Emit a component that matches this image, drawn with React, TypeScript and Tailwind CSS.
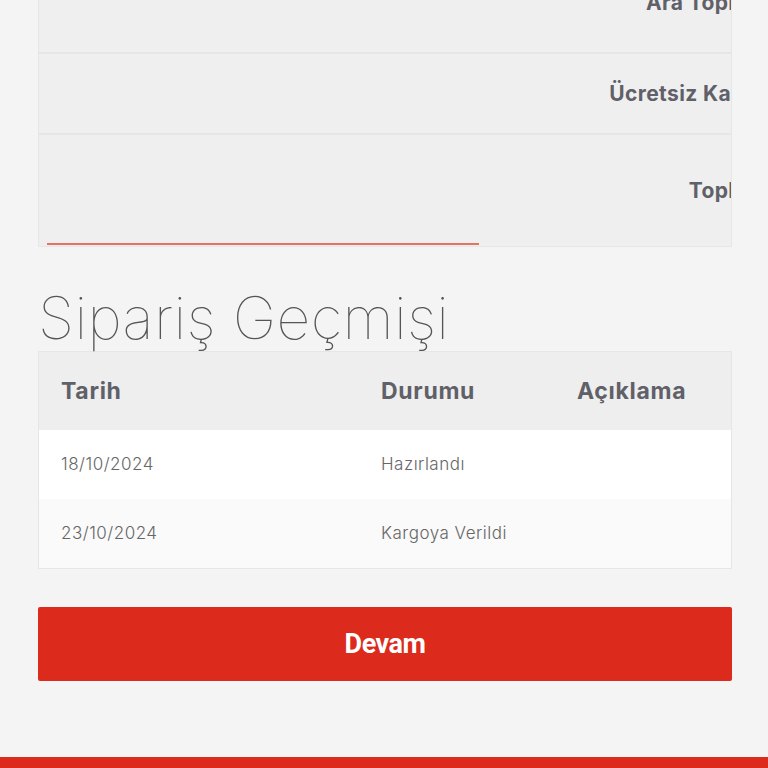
export default function App() {
  const totals = [
    { label: 'Ara Toplam:', h: 'h-[100px]' },
    { label: 'Ücretsiz Kargo:', h: 'h-[81px]' },
    { label: 'Toplam:', h: 'h-[111px]' },
  ];

  const history = [
    { date: '18/10/2024', status: 'Hazırlandı', note: '' },
    { date: '23/10/2024', status: 'Kargoya Verildi', note: '' },
  ];

  return (
    <div className="min-h-[768px] w-full overflow-hidden bg-[#f4f4f4] font-['Inter',sans-serif] flex flex-col">
      <div className="ml-[38px] w-[694px] -mt-[46px]">
        <div className="relative overflow-hidden border-x border-b border-[#e6e6e6] bg-[#efefef]">
          <div className="w-[735px]">
            {totals.map((t, i) => (
              <div
                key={t.label}
                className={`${t.h} flex items-center justify-end border-[#e6e6e6] ${i < totals.length - 1 ? 'border-b-2' : ''}`}
              >
                <span className="text-[21px] font-bold tracking-[0.4px] text-[#606068] whitespace-nowrap">{t.label}</span>
              </div>
            ))}
          </div>
          <div className="absolute bottom-[1px] left-[8px] h-[2px] w-[432px] bg-[#e07563]" />
        </div>

        <h2 className="mt-[40px] text-[59px] leading-[62px] font-[100] tracking-[0.3px] text-[#555] whitespace-nowrap">
          Sipariş Geçmişi
        </h2>

        <div className="mt-[2px] border border-[#e6e6e6] bg-white">
          <div className="grid grid-cols-[320px_196px_1fr] h-[78px] items-center bg-[#eeeeee] px-[22px] text-[23px] font-bold tracking-[0.7px] text-[#606068]">
            <span>Tarih</span>
            <span>Durumu</span>
            <span>Açıklama</span>
          </div>
          {history.map((r, i) => (
            <div
              key={r.date}
              className={`grid grid-cols-[320px_196px_1fr] h-[69px] items-center px-[22px] text-[17px] font-light tracking-[0.5px] text-[#666] ${i % 2 === 1 ? 'bg-[#fafafa]' : 'bg-white'}`}
            >
              <span>{r.date}</span>
              <span>{r.status}</span>
              <span>{r.note}</span>
            </div>
          ))}
        </div>

        <button className="mt-[38px] flex h-[74px] w-full items-center justify-center rounded-[2px] bg-[#dc2a1c] font-['Roboto',sans-serif] text-[27px] font-bold tracking-[-0.5px] text-white">
          Devam
        </button>
      </div>

      <div className="mt-auto h-[11px] w-full bg-[#dc2a1c]" />
    </div>
  );
}
